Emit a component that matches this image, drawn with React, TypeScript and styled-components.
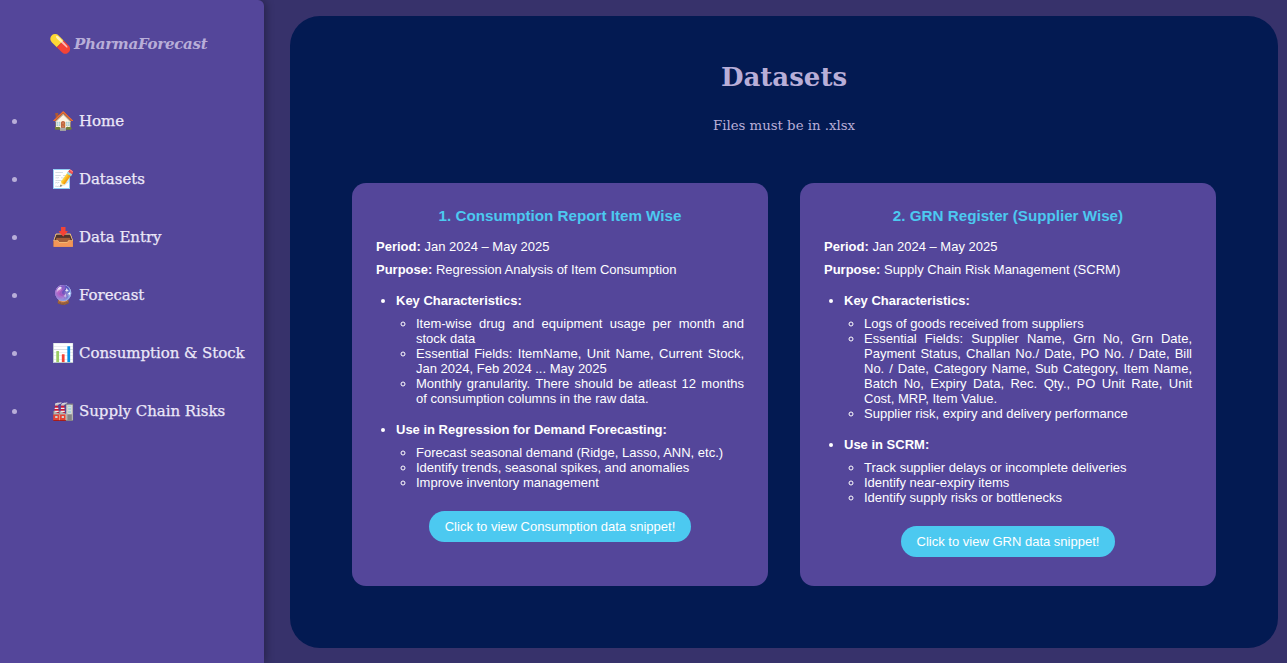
import * as React from 'react';
import styled, { createGlobalStyle } from 'styled-components';

const Global = createGlobalStyle`
    html, body {
        margin: 0;
        height: 100%;
        overflow: hidden;
        background: #37326b;
    }
    #root {
        height: 100%;
    }
`;

const Page = styled.div`
    display: flex;
    height: 663px;
    font-family: "Liberation Sans", Arial, sans-serif;
`;

const Sidebar = styled.aside`
    flex: 0 0 264px;
    background: #54469a;
    border-top-right-radius: 6px;
    box-shadow: 2px 0 8px rgba(0, 0, 0, 0.3);
    font-family: "DejaVu Serif", serif;
`;

const Brand = styled.h2`
    margin: 0;
    padding: 34px 0 0 49px;
    height: 30px;
    font-size: 15px;
    line-height: 20px;
    letter-spacing: -0.25px;
    font-style: italic;
    font-weight: 700;
    color: #b8aed8;
    white-space: nowrap;
`;

const BrandIcon = styled.span`
    display: inline-block;
    width: 25px;
    font-size: 18px;
    font-style: normal;
    letter-spacing: 0;
    vertical-align: -1px;
`;

const Menu = styled.ul`
    margin: 28px 0 0;
    padding: 0 0 0 28px;
    color: #b8aed8;
`;

const MenuItem = styled.li`
    height: 58px;
    padding-left: 24px;
    line-height: 58px;
    font-size: 15px;
    letter-spacing: -0.05px;
    -webkit-text-stroke: 0.25px #ece8f8;
    color: #ece8f8;
    white-space: nowrap;
    &::marker {
        color: #b8aed8;
    }
`;

const Emoji = styled.span`
    display: inline-block;
    width: 27px;
    font-size: 18px;
    letter-spacing: 0;
    vertical-align: -1px;
`;

const Main = styled.main`
    flex: 1;
    margin: 16px 9px 15px 26px;
    padding: 40px 62px 0;
    background: #031a52;
    border-radius: 30px;
`;

const Title = styled.h1`
    margin: 0;
    text-align: center;
    font-family: "DejaVu Serif", serif;
    font-size: 26px;
    line-height: 42px;
    color: #b8aed8;
`;

const Subtitle = styled.p`
    margin: 18px 0 0;
    text-align: center;
    font-family: "DejaVu Serif", serif;
    font-size: 13.3px;
    line-height: 20px;
    color: #b8aed8;
`;

const Cards = styled.div`
    display: grid;
    grid-template-columns: 416px 416px;
    gap: 32px;
    margin-top: 47px;
`;

const Card = styled.section`
    height: 403px;
    box-sizing: border-box;
    padding: 24px;
    background: #54469a;
    border-radius: 14px;
    color: #fff;
    font-size: 13px;
    line-height: 15px;
`;

const CardTitle = styled.h3`
    margin: 0 0 14px;
    text-align: center;
    font-size: 15.2px;
    line-height: 18px;
    color: #4cc9f0;
`;

const Meta = styled.p`
    margin: 0 0 8px;
`;

const Section = styled.ul`
    margin: 16px 0 0;
    padding-left: 20px;
`;

const SectionItem = styled.li`
    margin-bottom: 16px;
`;

const SubList = styled.ul`
    margin: 8px 0 0;
    padding-left: 20px;
    text-align: justify;
    list-style: circle;
`;

const SnippetRow = styled.div`
    display: flex;
    justify-content: center;
    margin-top: 21px;
`;

const SnippetButton = styled.button`
    height: 31px;
    padding: 0 16px;
    border: 0;
    border-radius: 16px;
    background: #4cc9f0;
    color: #fff;
    font-family: inherit;
    font-size: 13px;
`;

const nav = [
    ['🏠', 'Home'],
    ['📝', 'Datasets'],
    ['📥', 'Data Entry'],
    ['🔮', 'Forecast'],
    ['📊', 'Consumption & Stock'],
    ['🏭', 'Supply Chain Risks'],
];

const cards = [
    {
        title: '1. Consumption Report Item Wise',
        purpose: 'Regression Analysis of Item Consumption',
        key: [
            'Item-wise drug and equipment usage per month and stock data',
            'Essential Fields: ItemName, Unit Name, Current Stock, Jan 2024, Feb 2024 ... May 2025',
            'Monthly granularity. There should be atleast 12 months of consumption columns in the raw data.',
        ],
        useTitle: 'Use in Regression for Demand Forecasting:',
        use: [
            'Forecast seasonal demand (Ridge, Lasso, ANN, etc.)',
            'Identify trends, seasonal spikes, and anomalies',
            'Improve inventory management',
        ],
        button: 'Click to view Consumption data snippet!',
    },
    {
        title: '2. GRN Register (Supplier Wise)',
        purpose: 'Supply Chain Risk Management (SCRM)',
        key: [
            'Logs of goods received from suppliers',
            'Essential Fields: Supplier Name, Grn No, Grn Date, Payment Status, Challan No./ Date, PO No. / Date, Bill No. / Date, Category Name, Sub Category, Item Name, Batch No, Expiry Data, Rec. Qty., PO Unit Rate, Unit Cost, MRP, Item Value.',
            'Supplier risk, expiry and delivery performance',
        ],
        useTitle: 'Use in SCRM:',
        use: [
            'Track supplier delays or incomplete deliveries',
            'Identify near-expiry items',
            'Identify supply risks or bottlenecks',
        ],
        button: 'Click to view GRN data snippet!',
    },
];

export default function App() {
    return (
        <Page>
            <Global />
            <Sidebar>
                <Brand><BrandIcon>💊</BrandIcon>PharmaForecast</Brand>
                <Menu>
                    {nav.map(([icon, label]) => (
                        <MenuItem key={label}>
                            <Emoji>{icon}</Emoji>
                            {label}
                        </MenuItem>
                    ))}
                </Menu>
            </Sidebar>
            <Main>
                <Title>Datasets</Title>
                <Subtitle>Files must be in .xlsx</Subtitle>
                <Cards>
                    {cards.map((c) => (
                        <Card key={c.title}>
                            <CardTitle>{c.title}</CardTitle>
                            <Meta><b>Period:</b> Jan 2024 – May 2025</Meta>
                            <Meta><b>Purpose:</b> {c.purpose}</Meta>
                            <Section>
                                <SectionItem>
                                    <b>Key Characteristics:</b>
                                    <SubList>
                                        {c.key.map((t) => <li key={t}>{t}</li>)}
                                    </SubList>
                                </SectionItem>
                                <SectionItem>
                                    <b>{c.useTitle}</b>
                                    <SubList>
                                        {c.use.map((t) => <li key={t}>{t}</li>)}
                                    </SubList>
                                </SectionItem>
                            </Section>
                            <SnippetRow>
                                <SnippetButton>{c.button}</SnippetButton>
                            </SnippetRow>
                        </Card>
                    ))}
                </Cards>
            </Main>
        </Page>
    );
}
